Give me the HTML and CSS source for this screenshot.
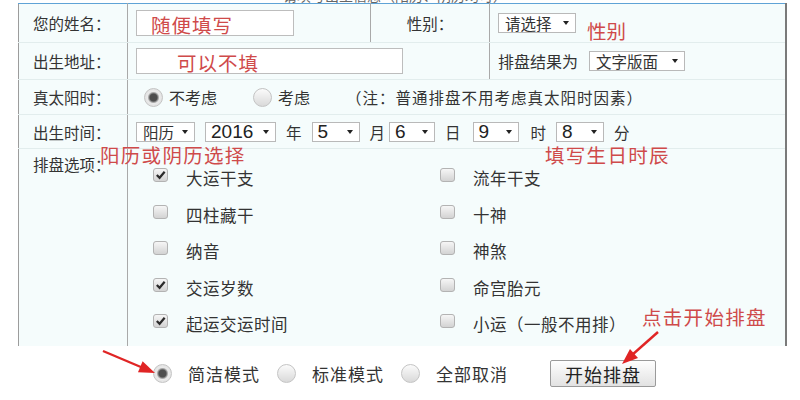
FILE: index.html
```html
<!DOCTYPE html>
<html lang="zh-CN">
<head>
    <meta charset="UTF-8">
    <title>八字排盘</title>
    <link rel="stylesheet" href="styles.css">
</head>
<body>
    <div class="caption"><span>请填写出生信息（阳历、阴历均可）</span></div>

    <table class="form">
        <colgroup>
            <col class="c1"><col class="c2"><col class="c3"><col class="c4">
        </colgroup>
        <tr class="r1">
            <td class="lbl">您的姓名：</td>
            <td class="val"><div class="input name"><span class="note">随便填写</span></div></td>
            <td class="mid">性别：</td>
            <td class="val split">
                <span class="sel s-sex">请选择</span>
                <span class="note sex">性别</span>
            </td>
        </tr>
        <tr class="r2">
            <td class="lbl">出生地址：</td>
            <td class="val" colspan="2"><div class="input addr"><span class="note">可以不填</span></div></td>
            <td class="val split">
                <div class="line">排盘结果为 <span class="sel s-mode">文字版面</span></div>
            </td>
        </tr>
        <tr class="r3">
            <td class="lbl">真太阳时：</td>
            <td class="val" colspan="3">
                <div class="line solar">
                    <span class="rd on"></span><span class="rl">不考虑</span>
                    <span class="rd"></span><span class="rl">考虑</span>
                    <span class="tip">（注：普通排盘不用考虑真太阳时因素）</span>
                </div>
            </td>
        </tr>
        <tr class="r4">
            <td class="lbl">出生时间：</td>
            <td class="val" colspan="3">
                <div class="line date">
                    <span class="sel s-cal">阳历</span>
                    <span class="sel num s-year">2016</span>
                    <span class="unit">年</span>
                    <span class="sel num s-sm">5</span>
                    <span class="unit tight">月</span>
                    <span class="sel num s-xs">6</span>
                    <span class="unit">日</span>
                    <span class="sel num s-xs push">9</span>
                    <span class="unit push">时</span>
                    <span class="sel num s-sm">8</span>
                    <span class="unit">分</span>
                </div>
            </td>
        </tr>
        <tr class="r5">
            <td class="lbl top">排盘选项：</td>
            <td class="val top" colspan="3">
                <div class="opts">
                    <div class="opt"><span class="cb on"><svg viewBox="0 0 14 13"><path d="M3 6.5 L6 9.5 L11.5 3"/></svg></span>大运干支</div>
                    <div class="opt"><span class="cb"></span>流年干支</div>
                    <div class="opt"><span class="cb"></span>四柱藏干</div>
                    <div class="opt"><span class="cb"></span>十神</div>
                    <div class="opt"><span class="cb"></span>纳音</div>
                    <div class="opt"><span class="cb"></span>神煞</div>
                    <div class="opt"><span class="cb on"><svg viewBox="0 0 14 13"><path d="M3 6.5 L6 9.5 L11.5 3"/></svg></span>交运岁数</div>
                    <div class="opt"><span class="cb"></span>命宫胎元</div>
                    <div class="opt"><span class="cb on"><svg viewBox="0 0 14 13"><path d="M3 6.5 L6 9.5 L11.5 3"/></svg></span>起运交运时间</div>
                    <div class="opt"><span class="cb"></span>小运（一般不用排）</div>
                </div>
            </td>
        </tr>
    </table>

    <div class="actions">
        <span class="rd on"></span><span class="al">简洁模式</span>
        <span class="rd"></span><span class="al">标准模式</span>
        <span class="rd"></span><span class="al">全部取消</span>
        <button class="go">开始排盘</button>
    </div>

    <!-- 标注 -->
    <span class="mark m-cal">阳历或阴历选择</span>
    <span class="mark m-time">填写生日时辰</span>
    <span class="mark m-go">点击开始排盘</span>

    <svg class="arrows" width="800" height="400" viewBox="0 0 800 400">
        <line x1="103" y1="351" x2="142" y2="367.5"/>
        <polygon points="155,373 138,372.3 142.6,361.3"/>
        <line x1="658" y1="332" x2="632" y2="355"/>
        <polygon points="622,364 630,348.9 638,357.9"/>
    </svg>
</body>
</html>
```

FILE: styles.css
```css
body {
    margin: 0;
    width: 800px;
    height: 400px;
    overflow: hidden;
    position: relative;
    background: #fff;
    color: #333;
    font-family: "Noto Sans CJK SC", "Liberation Sans", sans-serif;
    font-size: 16px;
}

/* 顶部被截掉的标题 */
.caption {
    height: 3px;
    overflow: hidden;
    padding-left: 283px;
    font-size: 14px;
    line-height: 14px;
    color: #666;
}

.caption span {
    display: block;
    margin-top: -12px;
}

/* 表单表格 */
.form {
    margin-left: 18px;
    width: 767px;
    table-layout: fixed;
    border-collapse: collapse;
    background: #f5fcfc;
    border-top: 1px solid #5fa3d6;
    border-left: 1px solid #9c9c9c;
    border-right: 2px solid #7a7a7a;
}

.c1 { width: 109px; }
.c2 { width: 243px; }
.c3 { width: 119px; }
.c4 { width: 296px; }

.form td {
    padding: 0;
    vertical-align: middle;
    border-bottom: 1px solid #e2eded;
    white-space: nowrap;
}

.form tr.r5 td {
    border-bottom: none;
}

.r1 { height: 39px; }
.r2 { height: 37px; }
.r3 { height: 35px; }
.r4 { height: 34px; }
.r5 { height: 197px; }

.form .lbl {
    padding-left: 14px;
    border-right: 1px solid #a9a9a9;
    font-size: 15.5px;
}

.form .mid {
    text-align: center;
    border-left: 1px solid #a9a9a9;
    font-size: 15.5px;
}

.form .split {
    border-left: 1px solid #a9a9a9;
}

.form .val {
    padding-left: 8px;
}

.form .top {
    vertical-align: top;
}

.form .lbl.top {
    padding-top: 4px;
}

.line {
    display: flex;
    align-items: center;
}

/* 输入框 */
.input {
    box-sizing: border-box;
    height: 26px;
    background: #fff;
    border: 1px solid #bdbdbd;
    display: flex;
    align-items: center;
}

.input.name {
    width: 158px;
    padding-left: 14px;
}

.input.addr {
    width: 267px;
    padding-left: 40px;
}

.note {
    color: #cf4a4a;
    font-size: 19.5px;
    letter-spacing: 1px;
    line-height: 24px;
    position: relative;
    top: 2px;
}

.note.sex {
    position: absolute;
    left: 587px;
    top: 19px;
    letter-spacing: 0;
}

/* 下拉框 */
.sel {
    box-sizing: border-box;
    display: inline-flex;
    align-items: center;
    justify-content: space-between;
    height: 20px;
    padding: 0 6px 0 6px;
    background: #fff;
    border: 1px solid #b9b9b9;
    font-size: 15.5px;
    line-height: 18px;
}

.sel::after {
    content: "";
    border-left: 3px solid transparent;
    border-right: 3px solid transparent;
    border-top: 4px solid #222;
    margin-left: 6px;
}

.s-sex { width: 78px; }
.s-mode { width: 96px; margin-left: 11px; }
.s-cal { width: 59px; }
.s-year { width: 71px; }
.s-sm { width: 48px; }
.s-xs { width: 46px; }

.sel.num {
    font-family: "Liberation Sans", sans-serif;
    font-size: 19px;
    color: #222;
    padding-left: 5px;
}

.date {
    gap: 10px;
}

.unit {
    font-size: 15.5px;
}

.unit.tight {
    margin-right: -6px;
}

.push {
    margin-left: 2px;
}

/* 单选框 */
.rd {
    box-sizing: border-box;
    display: inline-block;
    width: 19px;
    height: 19px;
    border-radius: 50%;
    border: 1px solid #c4c4c4;
    background: linear-gradient(#fbfbfb, #d9d9d9);
    flex: none;
}

.rd.on {
    background: radial-gradient(circle, #4d4d4d 0 3.5px, #8a8a8a 4.5px, #e9e9e9 6px, #dcdcdc 100%);
}

.solar {
    padding-left: 8px;
    font-size: 16px;
}

.rl {
    margin-left: 6px;
    margin-right: 36px;
}

.tip {
    font-size: 15.5px;
    letter-spacing: 1px;
}

/* 排盘选项 */
.opts {
    display: grid;
    grid-template-columns: 287px 260px;
    grid-auto-rows: 36.5px;
    padding: 11px 0 0 17px;
}

.opt {
    display: flex;
    align-items: center;
    font-size: 16.5px;
    letter-spacing: 0.5px;
}

.cb {
    box-sizing: border-box;
    display: inline-block;
    width: 15px;
    height: 14px;
    margin-right: 18px;
    border: 1px solid #b3b3b3;
    border-radius: 3px;
    background: linear-gradient(#f6f6f6, #d3d3d3);
    position: relative;
    top: -3px;
}

.cb svg {
    display: block;
    width: 13px;
    height: 12px;
}

.cb svg path {
    fill: none;
    stroke: #2b2b2b;
    stroke-width: 2.4;
}

/* 底部模式与按钮 */
.actions {
    display: flex;
    align-items: center;
    height: 55px;
    padding-left: 153px;
}

.al {
    margin-left: 16px;
    margin-right: 17px;
    font-size: 17px;
    letter-spacing: 1px;
}

.go {
    margin-left: 25px;
    width: 106px;
    height: 27px;
    padding: 0;
    border: 1px solid #9a9a9a;
    border-radius: 2px;
    background: linear-gradient(#fefefe, #e2e2e2);
    font-family: "Noto Sans CJK SC", sans-serif;
    font-size: 18px;
    color: #222;
    letter-spacing: 1px;
}

/* 红色标注 */
.mark {
    position: absolute;
    color: #cf4a4a;
    font-size: 19.5px;
    letter-spacing: 1.3px;
    line-height: 24px;
}

.m-cal { left: 100px; top: 143px; }
.m-time { left: 545px; top: 143px; }
.m-go { left: 642px; top: 305px; }

.arrows {
    position: absolute;
    left: 0;
    top: 0;
    pointer-events: none;
}

.arrows line {
    stroke: #e02525;
    stroke-width: 2.4;
}

.arrows polygon {
    fill: #e02525;
}
```
